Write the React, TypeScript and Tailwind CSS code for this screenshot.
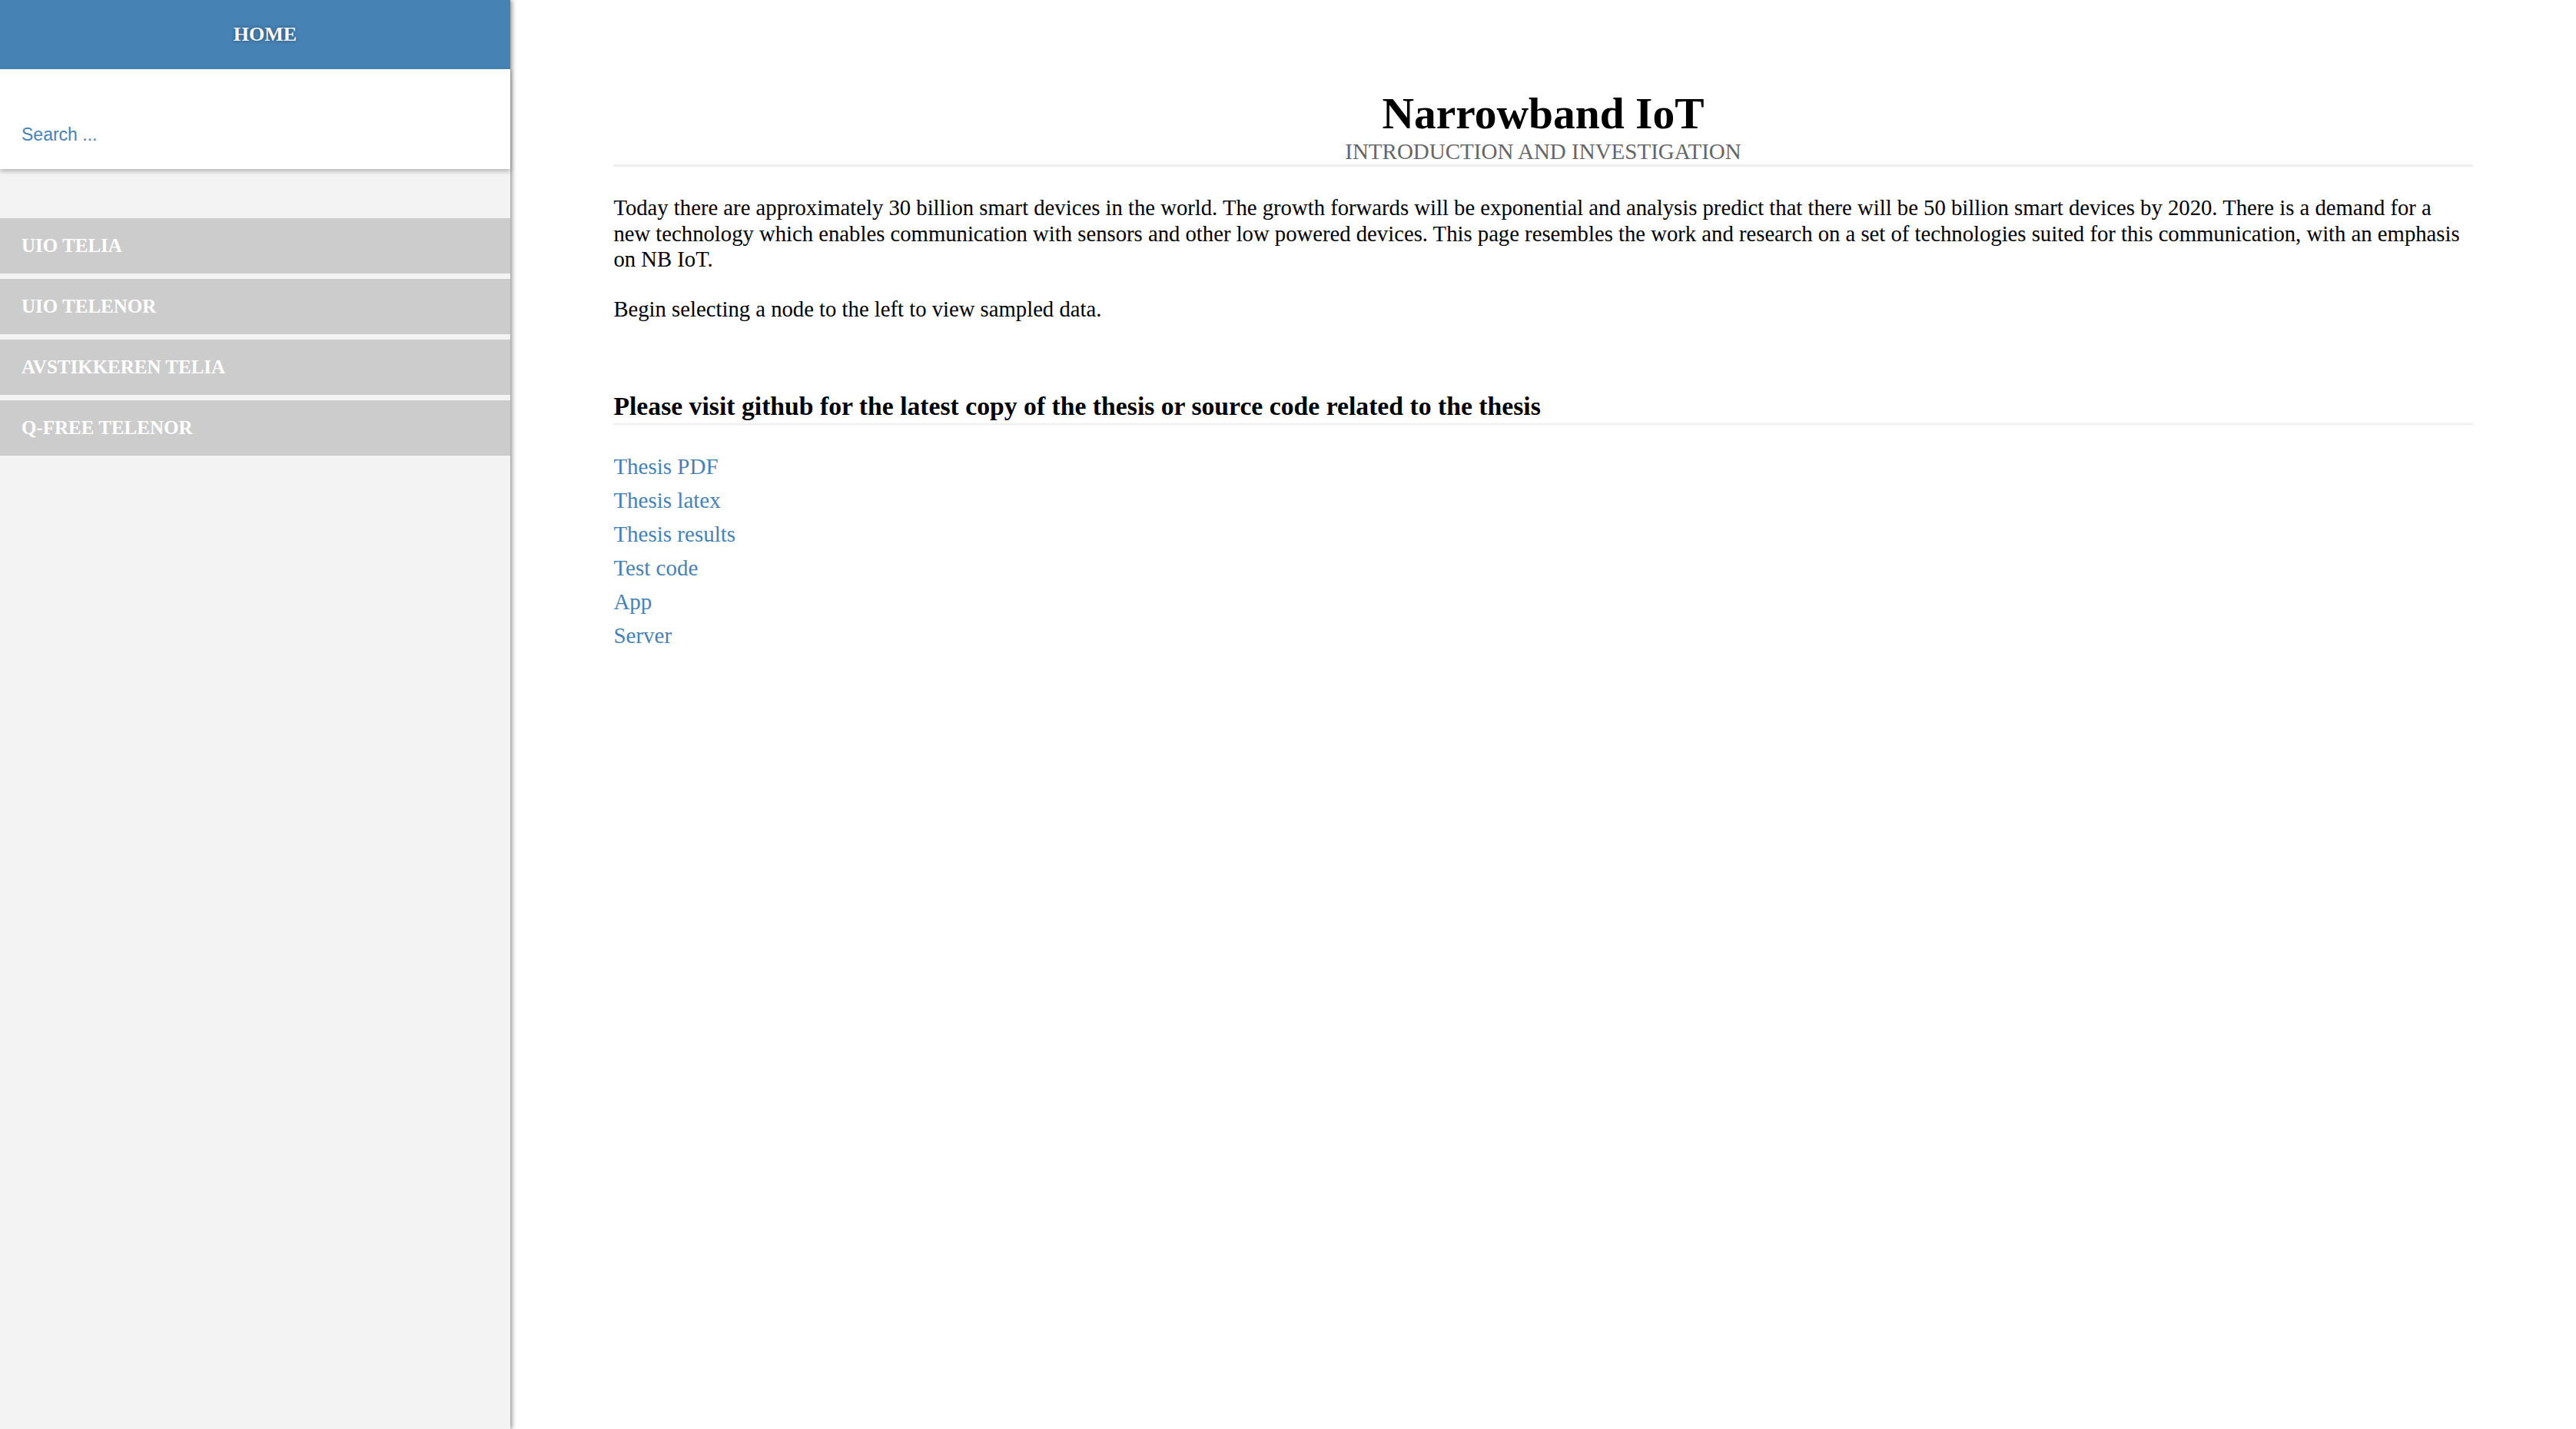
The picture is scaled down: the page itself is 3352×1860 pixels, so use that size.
import React from 'react';

const nodes = ['UIO TELIA', 'UIO TELENOR', 'AVSTIKKEREN TELIA', 'Q-FREE TELENOR'];

const links = ['Thesis PDF', 'Thesis latex', 'Thesis results', 'Test code', 'App', 'Server'];

const serif = "font-['Liberation_Serif','Times_New_Roman',serif]";

const Sidebar: React.FC = () => (
  <aside className="relative z-10 flex w-[664px] shrink-0 flex-col bg-[#f3f3f3] shadow-[2px_0_6px_rgba(0,0,0,0.45)]">
    <div className="flex h-[90px] items-center justify-center bg-[#4682b4] pl-[26px]">
      <span className={`${serif} text-[26px] font-bold leading-[1.15] text-white [text-shadow:0_0_4px_rgba(0,0,0,0.45)]`}>
        HOME
      </span>
    </div>

    <div className="relative z-10 h-[130px] bg-white pl-[28px] pt-[72px] shadow-[0_3px_6px_rgba(0,0,0,0.25)]">
      <input
        type="text"
        placeholder="Search ..."
        className="h-[27px] w-[600px] bg-transparent font-['Liberation_Sans',Arial,sans-serif] text-[23px] leading-[1.15] text-[#4682b4] outline-none placeholder:text-[#4682b4]"
      />
    </div>

    <nav className="mt-[64px] flex flex-col gap-[7px]">
      {nodes.map((node) => (
        <a
          key={node}
          href="#"
          className={`${serif} flex h-[72px] items-center bg-[#cccccc] pl-[28px] text-[25px] font-bold leading-[1.15] text-white`}
        >
          {node}
        </a>
      ))}
    </nav>
  </aside>
);

const App: React.FC = () => {
  return (
    <div className="flex h-[1860px] w-full overflow-hidden bg-white">
      <Sidebar />

      <main className={`${serif} flex-1 bg-white text-black`}>
        <div className="mx-auto w-[90%] pt-[115px]">
          <header className="border-b-[3px] border-[#eeeeee] text-center">
            <h1 className="text-[57.5px] font-bold leading-[1.15]">Narrowband IoT</h1>
            <p className="text-[29px] leading-[1.15] text-[#666666]">INTRODUCTION AND INVESTIGATION</p>
          </header>

          <p className="mt-[37px] text-[28.7px] leading-[33.5px]">
            Today there are approximately 30 billion smart devices in the world. The growth forwards will be
            exponential and analysis predict that there will be 50 billion smart devices by 2020. There is a demand
            for a new technology which enables communication with sensors and other low powered devices. This page
            resembles the work and research on a set of technologies suited for this communication, with an emphasis
            on NB IoT.
          </p>
          <p className="mt-[31px] text-[28.7px] leading-[33.5px]">Begin selecting a node to the left to view sampled data.</p>

          <h2 className="mt-[91px] border-b-2 border-[#eeeeee] pb-[2px] text-[33.7px] font-bold leading-[1.15]">
            Please visit github for the latest copy of the thesis or source code related to the thesis
          </h2>

          <ul className="mt-[32px]">
            {links.map((link) => (
              <li key={link} className="text-[29px] leading-[44px]">
                <a href="#" className="text-[#4682b4]">
                  {link}
                </a>
              </li>
            ))}
          </ul>
        </div>
      </main>
    </div>
  );
};

export default App;
